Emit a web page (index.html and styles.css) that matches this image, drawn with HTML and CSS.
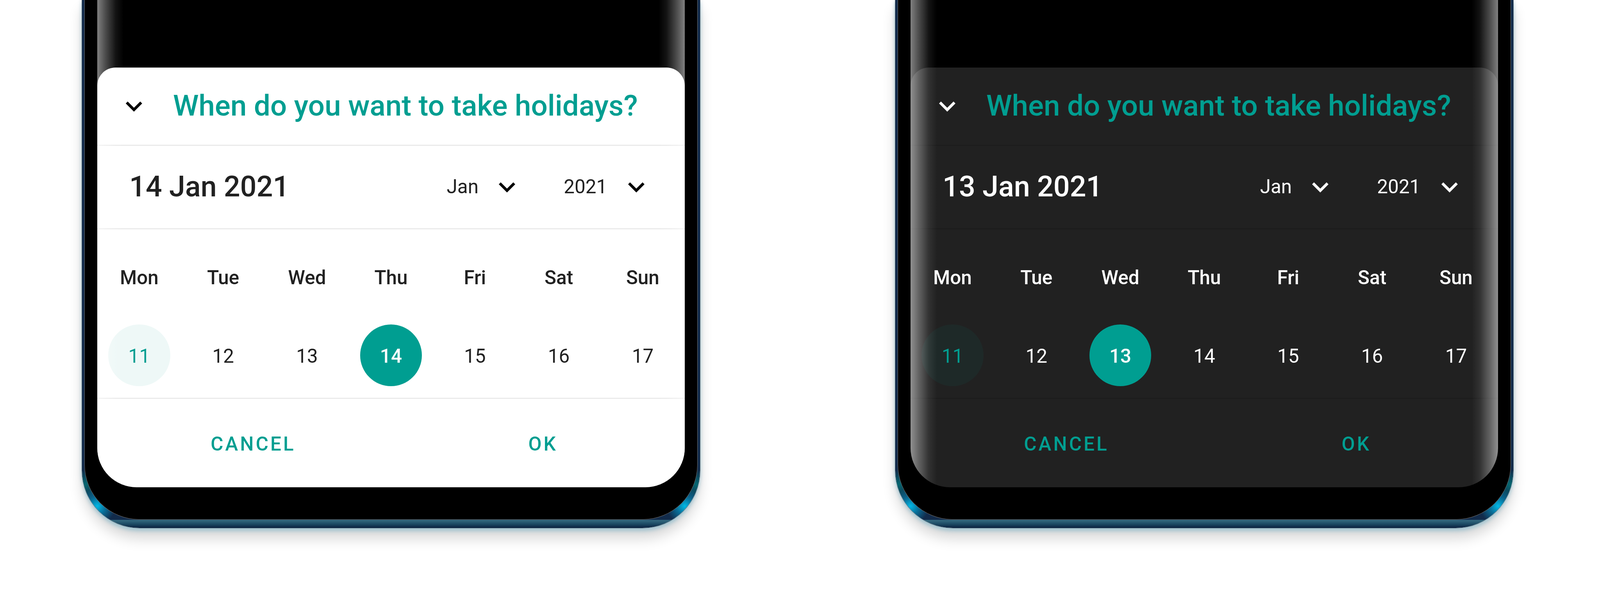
FILE: index.html
```html
<!DOCTYPE html>
<html lang="en">
<head>
<meta charset="utf-8">
<title>Date picker</title>
<link rel="stylesheet" href="styles.css">
</head>
<body>
<div class="stage">
  <div class="phone">
    <div class="bezel">
      <div class="screen">
        <div class="dialog light">
          <div class="d-head">
            <svg class="ico" viewBox="0 0 24 24"><path d="M16.59 8.59L12 13.17 7.41 8.59 6 10l6 6 6-6z"/></svg>
            <h1 class="title">When do you want to take holidays?</h1>
          </div>
          <div class="d-date">
            <span class="cur">14 Jan 2021</span>
            <div class="pickers">
              <span class="pick">Jan</span>
              <svg class="ico ico-m" viewBox="0 0 24 24"><path d="M16.59 8.59L12 13.17 7.41 8.59 6 10l6 6 6-6z"/></svg>
              <span class="pick pick-y">2021</span>
              <svg class="ico ico-y" viewBox="0 0 24 24"><path d="M16.59 8.59L12 13.17 7.41 8.59 6 10l6 6 6-6z"/></svg>
            </div>
          </div>
          <div class="d-cal">
            <div class="week">
              <span>Mon</span><span>Tue</span><span>Wed</span><span>Thu</span><span>Fri</span><span>Sat</span><span>Sun</span>
            </div>
            <div class="days">
              <span class="day today">11</span><span class="day">12</span><span class="day">13</span><span class="day sel">14</span><span class="day">15</span><span class="day">16</span><span class="day">17</span>
            </div>
          </div>
          <div class="d-actions">
            <span class="btn">CANCEL</span>
            <span class="btn">OK</span>
          </div>
        </div>
        <div class="edge"></div>
      </div>
    </div>
  </div>

  <div class="phone">
    <div class="bezel">
      <div class="screen">
        <div class="dialog dark">
          <div class="d-head">
            <svg class="ico" viewBox="0 0 24 24"><path d="M16.59 8.59L12 13.17 7.41 8.59 6 10l6 6 6-6z"/></svg>
            <h1 class="title">When do you want to take holidays?</h1>
          </div>
          <div class="d-date">
            <span class="cur">13 Jan 2021</span>
            <div class="pickers">
              <span class="pick">Jan</span>
              <svg class="ico ico-m" viewBox="0 0 24 24"><path d="M16.59 8.59L12 13.17 7.41 8.59 6 10l6 6 6-6z"/></svg>
              <span class="pick pick-y">2021</span>
              <svg class="ico ico-y" viewBox="0 0 24 24"><path d="M16.59 8.59L12 13.17 7.41 8.59 6 10l6 6 6-6z"/></svg>
            </div>
          </div>
          <div class="d-cal">
            <div class="week">
              <span>Mon</span><span>Tue</span><span>Wed</span><span>Thu</span><span>Fri</span><span>Sat</span><span>Sun</span>
            </div>
            <div class="days">
              <span class="day today">11</span><span class="day">12</span><span class="day sel">13</span><span class="day">14</span><span class="day">15</span><span class="day">16</span><span class="day">17</span>
            </div>
          </div>
          <div class="d-actions">
            <span class="btn">CANCEL</span>
            <span class="btn">OK</span>
          </div>
        </div>
        <div class="edge"></div>
      </div>
    </div>
  </div>
</div>
</body>
</html>
```

FILE: styles.css
```css
/* 1rem = 10 device pixels of the 4393px-wide frame */
* { box-sizing: border-box; }

html {
  font-size: calc(100vw / 439.3);
  overflow: hidden;
  margin: 0;
  padding: 0;
  background: #ffffff;
}

body {
  margin: 0;
  padding: 0;
  width: 100vw;
  height: 157rem;
  overflow: hidden;
  background: #ffffff;
  font-family: Roboto, "Noto Sans", "Liberation Sans", sans-serif;
}

.stage {
  display: flex;
  align-items: flex-start;
  gap: 53.6rem;
  padding-left: 22.5rem;
}

/* ---------- phone frame ---------- */
.phone {
  flex: none;
  width: 169.7rem;
  height: 145rem;
  padding: 0 0.7rem 2.2rem 0.7rem;
  border-radius: 0 0 15.8rem 15.8rem;
  background:
    radial-gradient(circle at 4.2rem 139rem, rgba(0, 192, 238, 0.95) 0, rgba(0, 170, 220, 0.55) 2.2rem, rgba(0, 150, 200, 0) 5rem),
    radial-gradient(circle at calc(100% - 4.2rem) 139rem, rgba(0, 192, 238, 0.95) 0, rgba(0, 170, 220, 0.55) 2.2rem, rgba(0, 150, 200, 0) 5rem),
    radial-gradient(circle at 1rem 133rem, rgba(0, 130, 130, 0.7) 0, rgba(0, 120, 130, 0) 4rem),
    radial-gradient(circle at calc(100% - 1rem) 133rem, rgba(0, 130, 130, 0.7) 0, rgba(0, 120, 130, 0) 4rem),
    linear-gradient(to bottom, #122b4b 0, #122b4b calc(100% - 2.3rem), #33697f calc(100% - 2.1rem), #1b4862 calc(100% - 1rem), #0a2140 100%);
  box-shadow:
    0 0 0 0.1rem rgba(8, 22, 38, 0.55),
    0 0 1.2rem rgba(140, 180, 195, 0.35),
    0 0.8rem 1rem rgba(130, 185, 205, 0.55),
    0 2.8rem 3.6rem rgba(0, 0, 0, 0.16);
}

.bezel {
  height: 100%;
  background: #000;
  border: 0.1rem solid #6d6d6d;
  border-top: none;
  border-radius: 0 0 15.1rem 15.1rem;
  padding: 0 3.4rem 8.8rem 3.4rem;
}

.screen {
  position: relative;
  height: 133.9rem;
  background: #000;
  border-radius: 0 0 10.8rem 10.8rem;
  overflow: hidden;
  display: flex;
  flex-direction: column;
  justify-content: flex-end;
}

/* curved glass edge highlight */
.edge {
  position: absolute;
  inset: 0;
  pointer-events: none;
  background: linear-gradient(90deg,
    rgba(255, 255, 255, 0.5) 0,
    rgba(255, 255, 255, 0.3) 2.2rem,
    rgba(255, 255, 255, 0.08) 5rem,
    rgba(255, 255, 255, 0) 7.2rem,
    rgba(255, 255, 255, 0) calc(100% - 7.2rem),
    rgba(255, 255, 255, 0.08) calc(100% - 5rem),
    rgba(255, 255, 255, 0.3) calc(100% - 2.2rem),
    rgba(255, 255, 255, 0.5) 100%);
}

/* ---------- dialog ---------- */
.dialog {
  border-radius: 5rem 5rem 0 0;
  display: flex;
  flex-direction: column;
}

.dialog.light {
  background: #ffffff;
  color: #212121;
  --div: #e2e2e2;
  --ico: #000000;
  --today: #eef8f7;
}

.dialog.dark {
  background: #212121;
  color: #ffffff;
  --div: #1b1b1b;
  --ico: #ffffff;
  --today: rgba(0, 160, 146, 0.07);
}

.ico {
  width: 9rem;
  height: 9rem;
  flex: none;
  fill: var(--ico);
}

.d-head {
  height: 21.5rem;
  display: flex;
  align-items: center;
  padding-left: 5.6rem;
  border-bottom: 0.3rem solid var(--div);
}

.title {
  margin: 0 0 0 6.2rem;
  font-size: 8rem;
  font-weight: 500;
  color: #009e91;
  line-height: 1;
  white-space: nowrap;
}

.d-date {
  height: 23rem;
  display: flex;
  align-items: center;
  padding-left: 8.8rem;
  padding-right: 8.8rem;
  border-bottom: 0.3rem solid var(--div);
}

.cur {
  font-size: 7.9rem;
  font-weight: 500;
  line-height: 1;
}

.pickers {
  margin-left: auto;
  display: flex;
  align-items: center;
}

.pick {
  font-size: 5.3rem;
  font-weight: 400;
  line-height: 1;
}

.ico-m { margin-left: 3.3rem; }
.pick-y { margin-left: 11.1rem; }
.ico-y { margin-left: 3.5rem; }

.d-cal {
  height: 46.5rem;
  padding-top: 8.3rem;
  border-bottom: 0.3rem solid var(--div);
}

.week, .days {
  display: grid;
  grid-template-columns: repeat(7, 1fr);
  justify-items: center;
}

.week span {
  font-size: 5.3rem;
  font-weight: 500;
  line-height: 10rem;
  height: 10rem;
}

.days {
  margin-top: 7.8rem;
}

.day {
  width: 17rem;
  height: 17rem;
  border-radius: 50%;
  display: flex;
  align-items: center;
  justify-content: center;
  font-size: 5.3rem;
  font-weight: 400;
  line-height: 1;
  padding-top: 0.6rem;
}

.day.today {
  background: var(--today);
  color: #009e91;
}

.day.sel {
  background: #009e91;
  color: #ffffff;
  font-weight: 500;
}

.d-actions {
  height: 24.4rem;
  display: grid;
  grid-template-columns: 79.6rem 79.6rem;
  align-items: center;
  padding-left: 3rem;
  padding-top: 0.6rem;
}

.btn {
  text-align: center;
  font-size: 5.3rem;
  font-weight: 500;
  letter-spacing: 0.55rem;
  color: #009e91;
  line-height: 1;
}
```
